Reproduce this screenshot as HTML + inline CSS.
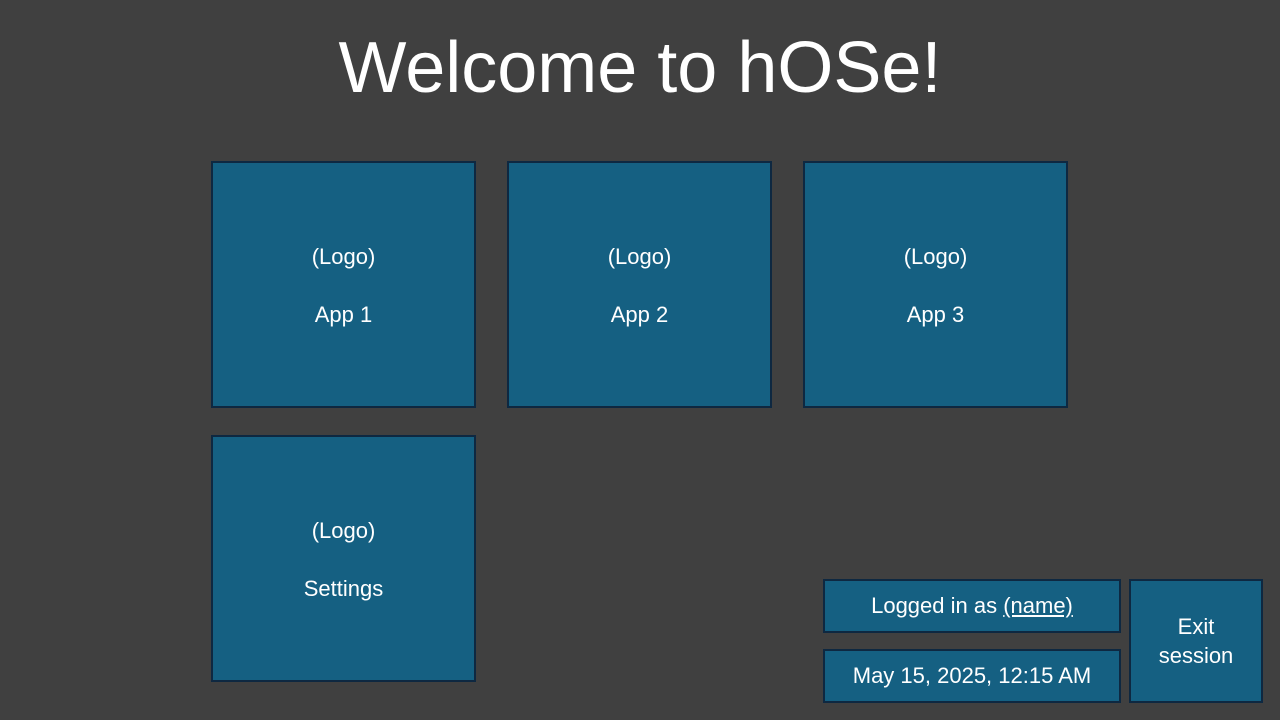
<!DOCTYPE html>
<html><head><meta charset="utf-8"><style>
body{margin:0;width:1280px;height:720px;background:#404040;font-family:"Liberation Sans",sans-serif;color:#fff;position:relative;overflow:hidden}
.t{position:absolute;left:0;width:1280px;top:23px;text-align:center;font-size:72px;line-height:90px}
.b{position:absolute;box-sizing:border-box;background:#156082;border:2px solid #0e2841;text-align:center;font-size:22px}
.tile .l{position:absolute;left:0;right:0;top:81px}
.tile .a{position:absolute;left:0;right:0;top:139px}
</style></head><body>
<div class="t">Welcome to hOSe!</div>
<div class="b tile" style="left:211px;top:161px;width:265px;height:247px"><div class="l">(Logo)</div><div class="a">App 1</div></div>
<div class="b tile" style="left:507px;top:161px;width:265px;height:247px"><div class="l">(Logo)</div><div class="a">App 2</div></div>
<div class="b tile" style="left:803px;top:161px;width:265px;height:247px"><div class="l">(Logo)</div><div class="a">App 3</div></div>
<div class="b tile" style="left:211px;top:435px;width:265px;height:247px"><div class="l">(Logo)</div><div class="a">Settings</div></div>
<div class="b" style="left:823px;top:579px;width:298px;height:54px;line-height:50px">Logged in as <u>(name)</u></div>
<div class="b" style="left:823px;top:649px;width:298px;height:54px;line-height:50px">May 15, 2025, 12:15 AM</div>
<div class="b" style="left:1129px;top:579px;width:134px;height:124px;padding-top:31px;line-height:29px">Exit<br>session</div>
</body></html>
